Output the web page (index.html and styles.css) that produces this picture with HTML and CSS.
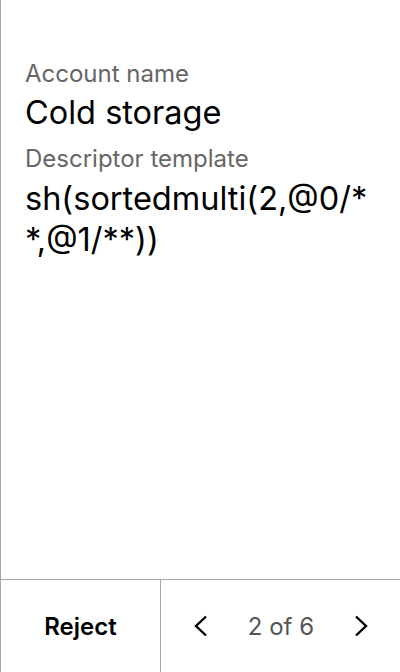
FILE: index.html
```html
<!DOCTYPE html>
<html>
<head>
<meta charset="utf-8">
<link rel="stylesheet" href="styles.css">
</head>
<body>
<div class="screen">
  <main class="content">
    <div class="label">Account name</div>
    <div class="value">Cold storage</div>
    <div class="label">Descriptor template</div>
    <div class="value descriptor">sh(sortedmulti(2,@0/**,@1/**))</div>
  </main>
  <footer class="footer">
    <button class="reject">Reject</button>
    <div class="pager">
      <button class="nav" aria-label="Previous">
        <svg width="16" height="24" viewBox="0 0 16 24"><path d="M13 2.5 L3 12 L13 21.5" fill="none" stroke="#000" stroke-width="2.4"/></svg>
      </button>
      <span class="count">2 of 6</span>
      <button class="nav" aria-label="Next">
        <svg width="16" height="24" viewBox="0 0 16 24"><path d="M3 2.5 L13 12 L3 21.5" fill="none" stroke="#000" stroke-width="2.4"/></svg>
      </button>
    </div>
  </footer>
</div>
</body>
</html>
```
FILE: styles.css
```css
html, body {
  margin: 0;
  padding: 0;
  background: #fff;
}
body {
  font-family: Inter, "Noto Sans", sans-serif;
  color: #000;
}
.screen {
  width: 400px;
  height: 672px;
  box-sizing: border-box;
  border-left: 1px solid #a8a8a8;
  display: flex;
  flex-direction: column;
}
.content {
  flex: 1;
  padding: 59px 24px 0 24px;
}
.label {
  font-size: 24px;
  line-height: 30px;
  color: #666;
  margin-bottom: 4px;
}
.value {
  font-size: 32.5px;
  line-height: 40px;
  margin-bottom: 11px;
}
.descriptor {
  word-break: break-all;
  line-height: 41px;
}
.footer {
  height: 92px;
  border-top: 1px solid #a8a8a8;
  display: flex;
}
.reject {
  width: 160px;
  border: none;
  border-right: 1px solid #a8a8a8;
  background: none;
  font-family: inherit;
  font-size: 24px;
  font-weight: 600;
  color: #000;
  padding: 0;
}
.pager {
  flex: 1;
  display: flex;
  align-items: center;
  justify-content: space-between;
  padding: 0 23px 0 24px;
}
.nav {
  border: none;
  background: none;
  padding: 0 8px;
  display: flex;
}
.count {
  font-size: 24px;
  color: #555;
}
```
